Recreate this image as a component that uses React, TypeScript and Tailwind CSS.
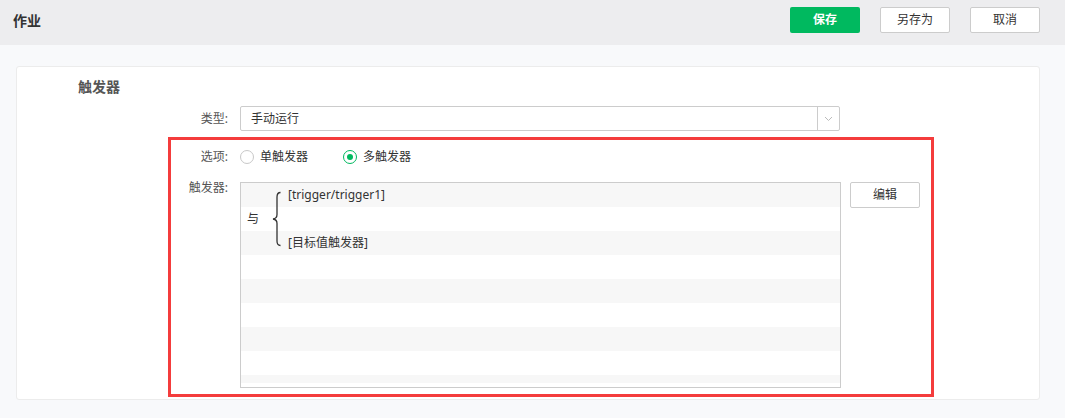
import React from 'react';

const FONT = "font-['Noto_Sans','Noto_Sans_CJK_SC',sans-serif]";

function Radio({ checked, label }: { checked?: boolean; label: string }) {
  return (
    <label className="flex items-center gap-[6px] cursor-pointer">
      <span
        className={`w-[14px] h-[14px] rounded-full border flex items-center justify-center bg-white ${
          checked ? 'border-[#00b95f]' : 'border-[#c8c8c8]'
        }`}
      >
        {checked && <span className="w-[6px] h-[6px] rounded-full bg-[#00b95f]" />}
      </span>
      <span className="text-[12px] text-[#333]">{label}</span>
    </label>
  );
}

function Brace() {
  return (
    <svg width="11" height="56" viewBox="0 0 11 56" className="shrink-0" aria-hidden>
      <path
        d="M9.5 1.5 Q6 1.5 6 6 L6 23.5 Q6 27.5 2 28 Q6 28.5 6 32.5 L6 50 Q6 54.5 9.5 54.5"
        fill="none"
        stroke="#333"
        strokeWidth="1.3"
      />
    </svg>
  );
}

export default function App() {
  return (
    <div className={`${FONT} w-[1065px] h-[418px] bg-[#f8f9fb] overflow-hidden`}>
      {/* Top bar */}
      <div className="h-[45px] bg-[#ededef] flex items-center justify-between pl-[13px] pr-[25px] pb-[5px]">
        <span className="text-[14px] font-bold text-[#333]">作业</span>
        <div className="flex items-center gap-[20px]">
          <button className="w-[70px] h-[26px] rounded-[2px] bg-[#00b95f] text-white text-[12px] font-bold">
            保存
          </button>
          <button className="w-[70px] h-[26px] rounded-[2px] bg-white border border-[#ccc] text-[#333] text-[12px]">
            另存为
          </button>
          <button className="w-[70px] h-[26px] rounded-[2px] bg-white border border-[#ccc] text-[#333] text-[12px]">
            取消
          </button>
        </div>
      </div>

      {/* Card */}
      <div className="ml-[16px] mt-[21px] w-[1024px] h-[334px] bg-white border border-[#ececec] rounded-[3px] pt-[10px]">
        <div className="pl-[61px] text-[14px] leading-[20px] font-bold text-[#555]">触发器</div>

        {/* 类型 */}
        <div className="flex items-center mt-[9px] pl-[151px]">
          <span className="w-[60px] text-right text-[12px] text-[#555]">类型:</span>
          <div className="ml-[12px] w-[600px] h-[25px] border border-[#ccc] rounded-[2px] flex items-center">
            <span className="flex-1 pl-[10px] text-[12px] text-[#333]">手动运行</span>
            <span className="w-[22px] h-full border-l border-[#ccc] flex items-center justify-center">
              <svg width="9" height="6" viewBox="0 0 9 6" aria-hidden>
                <path d="M1 1 L4.5 4.5 L8 1" fill="none" stroke="#bbb" strokeWidth="1" />
              </svg>
            </span>
          </div>
        </div>

        {/* Highlighted area */}
        <div className="ml-[151px] mt-[6px] w-[766px] h-[260px] border-[3px] border-[#f43c3c] pt-[7px]">
          <div className="flex items-center h-[20px]">
            <span className="w-[57px] text-right text-[12px] text-[#555]">选项:</span>
            <div className="ml-[12px] flex items-center gap-[35px]">
              <Radio label="单触发器" />
              <Radio checked label="多触发器" />
            </div>
          </div>

          <div className="flex items-start mt-[15px]">
            <span className="w-[57px] text-right text-[12px] text-[#555] leading-[14px] mt-[-1px]">触发器:</span>
            <div className="ml-[12px] w-[601px] h-[206px] border border-[#ccc] pb-[4px]">
              <div className="h-full bg-[repeating-linear-gradient(#f7f7f7_0px,#f7f7f7_24px,#ffffff_24px,#ffffff_48px)]">
                <div className="flex items-center h-[72px]">
                  <span className="pl-[6px] text-[12px] text-[#333]">与</span>
                  <span className="ml-[12px] mt-[-1px]">
                    <Brace />
                  </span>
                  <div className="ml-[6px] flex flex-col">
                    <div className="h-[24px] flex items-center text-[12px] text-[#333]">[trigger/trigger1]</div>
                    <div className="h-[24px]" />
                    <div className="h-[24px] flex items-center text-[12px] text-[#333]">[目标值触发器]</div>
                  </div>
                </div>
              </div>
            </div>
            <button className="ml-[9px] w-[70px] h-[26px] rounded-[2px] bg-white border border-[#ccc] text-[#333] text-[12px]">
              编辑
            </button>
          </div>
        </div>
      </div>
    </div>
  );
}
